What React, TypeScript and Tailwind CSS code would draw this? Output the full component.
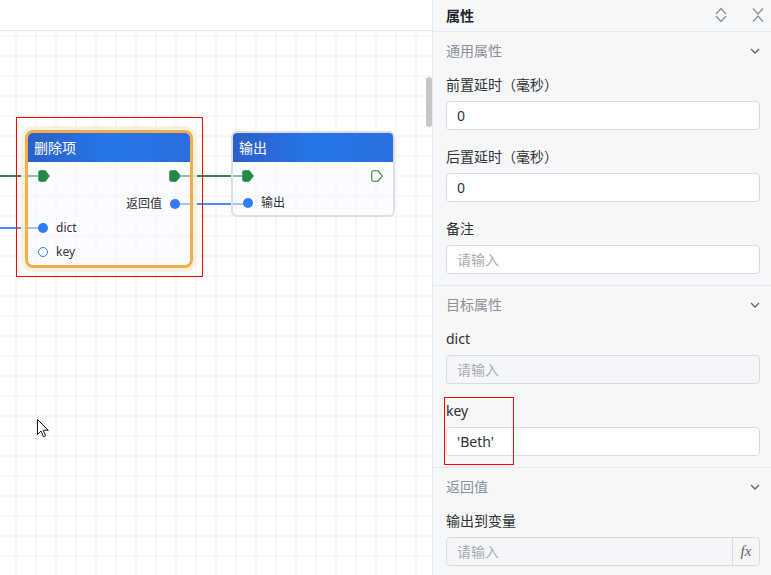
import React from "react";

const font = "font-['Noto_Sans','Noto_Sans_CJK_SC',sans-serif]";

function GreenPin({ hollow }: { hollow?: boolean }) {
  return (
    <svg width="12" height="12" viewBox="0 0 12 12" className="shrink-0">
      <path
        d="M2.2 0.8 H7 L11.2 6 L7 11.2 H2.2 Q0.8 11.2 0.8 9.8 V2.2 Q0.8 0.8 2.2 0.8 Z"
        fill={hollow ? "#ffffff" : "#228a45"}
        stroke="#228a45"
        strokeWidth="1.1"
      />
    </svg>
  );
}

function BlueDot({ hollow }: { hollow?: boolean }) {
  return hollow ? (
    <span className="w-[10px] h-[10px] rounded-full border-[1.5px] border-[#2f7cf6] bg-white shrink-0" />
  ) : (
    <span className="w-[10px] h-[10px] rounded-full bg-[#2f7cf6] shrink-0" />
  );
}

function ChevronDown() {
  return (
    <svg width="10" height="6" viewBox="0 0 10 6" fill="none">
      <path d="M1 1 L5 5 L9 1" stroke="#5f6368" strokeWidth="1.3" />
    </svg>
  );
}

function SectionTitle({ title }: { title: string }) {
  return (
    <div className="h-[38px] flex items-center justify-between pl-[13px] pr-[11px]">
      <span className="text-[14px] leading-[20px] text-[#8b9099]">{title}</span>
      <ChevronDown />
    </div>
  );
}

function Field({
  label,
  value,
  placeholder,
  gray,
  fx,
  first,
}: {
  label: string;
  value?: string;
  placeholder?: string;
  gray?: boolean;
  fx?: boolean;
  first?: boolean;
}) {
  return (
    <div className={first ? "mt-[5px]" : "mt-[17px]"}>
      <div className="h-[20px] text-[14px] leading-[20px] text-[#303133]">{label}</div>
      <div
        className={
          "mt-[6px] h-[29px] flex rounded-[4px] border border-[#d8dbe2] " +
          (gray ? "bg-[#f5f6f9]" : "bg-white")
        }
      >
        <div className="flex-1 flex items-center px-[10px] text-[14px]">
          {value ? (
            <span className="text-[#303133]">{value}</span>
          ) : (
            <span className="text-[#a8abb2]">{placeholder}</span>
          )}
        </div>
        {fx && (
          <div className="w-[27px] border-l border-[#d8dbe2] flex items-center justify-center font-['Liberation_Serif',serif] italic text-[15px] text-[#606266]">
            fx
          </div>
        )}
      </div>
    </div>
  );
}

export default function App() {
  return (
    <div className={`w-[771px] h-[575px] flex overflow-hidden bg-white ${font}`}>
      {/* canvas */}
      <div className="w-[432px] h-full relative flex flex-col">
        <div className="h-[31px] border-b border-[#e8e8e8] bg-white" />
        <div className="flex-1 bg-white bg-[linear-gradient(to_right,#f7f7f7_2px,transparent_2px),linear-gradient(to_bottom,#f7f7f7_2px,transparent_2px)] bg-[size:20px_20px] bg-[position:15px_4px]" />

        {/* edges */}
        <svg className="absolute left-0 top-0 pointer-events-none" width="432" height="575">
          <path d="M0 176 H38" stroke="#2b8a48" strokeWidth="2" />
          <path d="M181 176 H242" stroke="#2b8a48" strokeWidth="2" />
          <path d="M0 228 H43" stroke="#4c8cf6" strokeWidth="2" />
          <path d="M175 204 H247" stroke="#4c8cf6" strokeWidth="2" />
        </svg>

        {/* node: 删除项 */}
        <div className="absolute left-[25px] top-[130px] w-[168px] h-[138px] rounded-[8px] border-[3px] border-[#f2ae4e] ring-4 ring-[#fdeedc]/90 flex flex-col overflow-hidden">
          <div className="h-[29px] shrink-0 bg-linear-to-r from-[#2b60c8] via-[#2675ea] to-[#2a6fdf] text-white text-[14px] leading-[29px] pl-[6px]">
            删除项
          </div>
          <div className="flex-1 bg-[#f8faff]/50 pt-[2px] text-[12px] text-[#303133]">
            <div className="h-[24px] flex items-center justify-between pl-[10px] pr-[9px]">
              <GreenPin />
              <GreenPin />
            </div>
            <div className="mt-[4px] h-[24px] flex items-center justify-end gap-[8px] pr-[10px]">
              <span>返回值</span>
              <BlueDot />
            </div>
            <div className="h-[24px] flex items-center gap-[8px] pl-[10px]">
              <BlueDot />
              <span>dict</span>
            </div>
            <div className="h-[24px] flex items-center gap-[8px] pl-[10px]">
              <BlueDot hollow />
              <span>key</span>
            </div>
          </div>
        </div>

        {/* node: 输出 */}
        <div className="absolute left-[231px] top-[131px] w-[164px] h-[86px] rounded-[6px] border-2 border-[#dcdfe6] flex flex-col overflow-hidden">
          <div className="h-[29px] shrink-0 bg-linear-to-r from-[#2b60c8] via-[#2675ea] to-[#2a6fdf] text-white text-[14px] leading-[29px] pl-[6px]">
            输出
          </div>
          <div className="flex-1 bg-[#f8faff]/50 pt-[2px] text-[12px] text-[#303133]">
            <div className="h-[24px] flex items-center justify-between pl-[9px] pr-[10px]">
              <GreenPin />
              <GreenPin hollow />
            </div>
            <div className="mt-[3px] h-[24px] flex items-center gap-[8px] pl-[10px]">
              <BlueDot />
              <span>输出</span>
            </div>
          </div>
        </div>

        {/* selection outline */}
        <div className="absolute left-[16px] top-[117px] w-[187px] h-[160px] border border-[#ff0000] pointer-events-none" />

        {/* scrollbar */}
        <div className="absolute left-[426px] top-[77px] w-[6px] h-[50px] rounded-full bg-[#c6c6c6]" />

        {/* cursor */}
        <svg className="absolute left-[37px] top-[419px]" width="13" height="19" viewBox="0 0 13 19">
          <path
            d="M0.5 0.5 V15.5 L4 12 L6.5 17.8 L8.6 16.9 L6.2 11.3 H11.3 Z"
            fill="#ffffff"
            stroke="#1a1a1a"
            strokeWidth="1"
            strokeLinejoin="round"
          />
        </svg>
      </div>

      {/* properties panel */}
      <div className="flex-1 h-full border-l border-[#e4e7ed] bg-[#f6f7f9] flex flex-col relative">
        <div className="h-[32px] shrink-0 border-b border-[#e4e7ed] flex items-center pl-[13px] pr-[7px]">
          <span className="flex-1 text-[14px] font-bold text-[#1f2329]">属性</span>
          <svg width="12" height="16" viewBox="0 0 12 16" fill="none" className="mt-[-1px]">
            <path d="M1 7 L6 1.5 L11 7" stroke="#878c95" strokeWidth="1.2" />
            <path d="M1 9 L6 14.5 L11 9" stroke="#878c95" strokeWidth="1.2" />
          </svg>
          <svg width="12" height="16" viewBox="0 0 12 16" fill="none" className="ml-[25px] mt-[-1px]">
            <path d="M1 1.5 L6 7 L11 1.5" stroke="#878c95" strokeWidth="1.2" />
            <path d="M1 14.5 L6 9 L11 14.5" stroke="#878c95" strokeWidth="1.2" />
          </svg>
        </div>

        <div className="border-b border-[#e4e7ed]">
          <SectionTitle title="通用属性" />
          <div className="pl-[13px] pr-[11px] pb-[11px]">
            <Field first label="前置延时（毫秒）" value="0" />
            <Field label="后置延时（毫秒）" value="0" />
            <Field label="备注" placeholder="请输入" />
          </div>
        </div>

        <div className="border-b border-[#e4e7ed]">
          <SectionTitle title="目标属性" />
          <div className="pl-[13px] pr-[11px] pb-[11px]">
            <Field first label="dict" placeholder="请输入" gray />
            <Field label="key" value="'Beth'" />
          </div>
        </div>

        <div>
          <SectionTitle title="返回值" />
          <div className="pl-[13px] pr-[11px]">
            <Field first label="输出到变量" placeholder="请输入" gray fx />
          </div>
        </div>

        {/* highlight box */}
        <div className="absolute left-[11px] top-[397px] w-[70px] h-[68px] border border-[#ff0000] pointer-events-none" />
      </div>
    </div>
  );
}
